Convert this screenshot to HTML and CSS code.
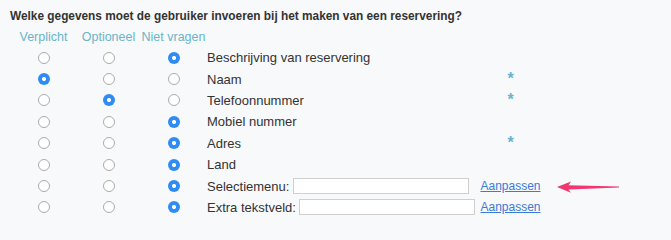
FILE: index.html
```html
<!DOCTYPE html>
<html>
<head>
<meta charset="utf-8">
<link rel="stylesheet" href="styles.css">
</head>
<body>
<div class="page">
  <h3 class="title">Welke gegevens moet de gebruiker invoeren bij het maken van een reservering?</h3>
  <div class="grid">
    <div class="head">Verplicht</div><div class="head">Optioneel</div><div class="head">Niet vragen</div><div></div><div></div>

    <div class="cell"><span class="radio"></span></div><div class="cell"><span class="radio"></span></div><div class="cell"><span class="radio on"></span></div>
    <div class="label">Beschrijving van reservering</div><div class="extra"></div>

    <div class="cell"><span class="radio on"></span></div><div class="cell"><span class="radio"></span></div><div class="cell"><span class="radio"></span></div>
    <div class="label">Naam</div><div class="extra"><span class="star">*</span></div>

    <div class="cell"><span class="radio"></span></div><div class="cell"><span class="radio on"></span></div><div class="cell"><span class="radio"></span></div>
    <div class="label">Telefoonnummer</div><div class="extra"><span class="star">*</span></div>

    <div class="cell"><span class="radio"></span></div><div class="cell"><span class="radio"></span></div><div class="cell"><span class="radio on"></span></div>
    <div class="label">Mobiel nummer</div><div class="extra"></div>

    <div class="cell"><span class="radio"></span></div><div class="cell"><span class="radio"></span></div><div class="cell"><span class="radio on"></span></div>
    <div class="label">Adres</div><div class="extra"><span class="star">*</span></div>

    <div class="cell"><span class="radio"></span></div><div class="cell"><span class="radio"></span></div><div class="cell"><span class="radio on"></span></div>
    <div class="label">Land</div><div class="extra"></div>

    <div class="cell"><span class="radio"></span></div><div class="cell"><span class="radio"></span></div><div class="cell"><span class="radio on"></span></div>
    <div class="label">Selectiemenu: <input class="field" type="text"></div><div class="extra"><a href="#" class="link">Aanpassen</a></div>

    <div class="cell"><span class="radio"></span></div><div class="cell"><span class="radio"></span></div><div class="cell"><span class="radio on"></span></div>
    <div class="label">Extra tekstveld: <input class="field" type="text"></div><div class="extra"><a href="#" class="link">Aanpassen</a></div>
  </div>
  <svg class="arrow" width="64" height="14" viewBox="0 0 64 14">
    <path d="M0 7 L14 1.5 L11.5 5.2 L62 6.4 L62 7.4 L11.5 9.4 L14 12.8 Z" fill="#f2366f"/>
  </svg>
</div>
</body>
</html>
```

FILE: styles.css
```css
html, body {
  margin: 0;
  padding: 0;
  background: #f8f9fb;
}
.page {
  position: relative;
  width: 671px;
  height: 224px;
  font-family: "Liberation Sans", Arial, sans-serif;
  color: #333;
  padding: 9px 0 0 11px;
  box-sizing: border-box;
  overflow: hidden;
}
.title {
  margin: 0 0 0 -1px;
  font-size: 11.85px;
  font-weight: bold;
  line-height: 15px;
  color: #333;
}
.grid {
  display: grid;
  grid-template-columns: 65px 65px 65px 272px 65px;
  grid-template-rows: 20px;
  grid-auto-rows: 21.4px;
  margin-top: 3px;
}
.head {
  text-align: center;
  font-size: 12.5px;
  color: #6ab4c9;
  line-height: 20px;
}
.cell {
  display: flex;
  align-items: center;
  justify-content: center;
}
.radio {
  width: 12px;
  height: 12px;
  box-sizing: border-box;
  border-radius: 50%;
  border: 1px solid #ababab;
  background: #fff;
  display: block;
}
.radio.on {
  border: none;
  background: radial-gradient(circle, #fff 0 1.8px, #2f8cf5 2.3px);
}
.label {
  display: flex;
  align-items: center;
  font-size: 13px;
  color: #333;
  padding-left: 1px;
  white-space: pre;
}
.field {
  width: 176px;
  height: 16px;
  box-sizing: border-box;
  border: 1px solid #cfcfcf;
  background: #fff;
  margin: 0;
  padding: 0;
}
.extra {
  display: flex;
  align-items: center;
  justify-content: center;
}
.star {
  color: #6ab4c9;
  font-size: 16px;
  font-weight: bold;
  line-height: 12px;
  margin-top: 0;
}
.link {
  color: #3a7ad8;
  font-size: 12px;
  text-decoration: underline;
}
.arrow {
  position: absolute;
  left: 557px;
  top: 180px;
}
```
